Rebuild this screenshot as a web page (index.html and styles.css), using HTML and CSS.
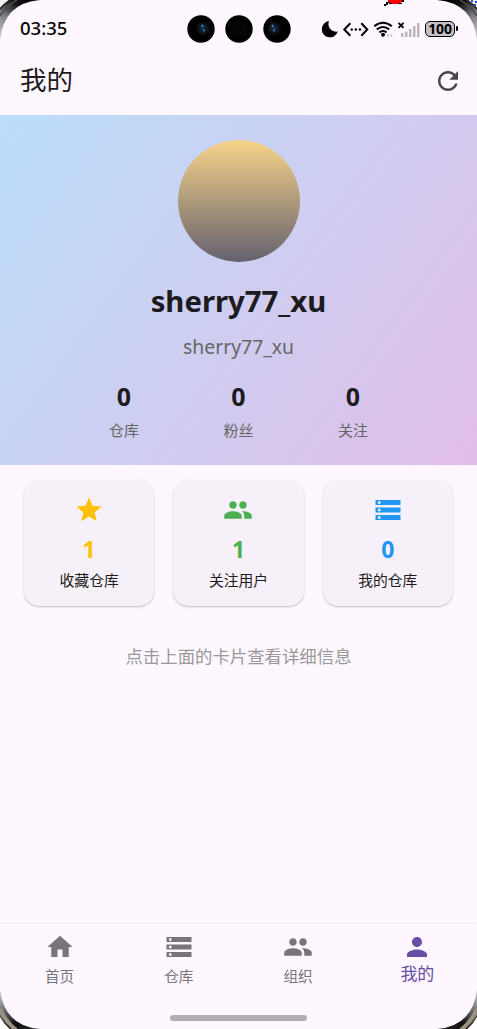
FILE: index.html
```html
<!DOCTYPE html>
<html lang="zh-CN">
<head>
<meta charset="utf-8">
<title>我的</title>
<link rel="stylesheet" href="styles.css">
</head>
<body>
<svg class="defs" width="0" height="0" aria-hidden="true">
  <defs>
    <symbol id="people" viewBox="0 0 24 24"><path d="M16 11c1.66 0 2.99-1.34 2.99-3S17.66 5 16 5s-3 1.34-3 3 1.34 3 3 3zm-8 0c1.66 0 2.99-1.34 2.99-3S9.66 5 8 5 5 6.34 5 8s1.34 3 3 3zm0 2c-2.33 0-7 1.17-7 3.5V19h14v-2.5c0-2.33-4.67-3.500-7-3.500zm8 0c-.29 0-.62.02-.97.05 1.160.84 1.970 1.970 1.970 3.450V19h6v-2.500c0-2.330-4.670-3.500-7-3.500z"/></symbol>
    <symbol id="storage" viewBox="0 0 24 24"><path d="M2 20h20v-4H2v4zm2-3h2v2H4v-2zM2 4v4h20V4H2zm4 3H4V5h2v2zm-4 7h20v-4H2v4zm2-3h2v2H4v-2z"/></symbol>
    <symbol id="home" viewBox="0 0 24 24"><path d="M10 20v-6h4v6h5v-8h3L12 3 2 12h3v8z"/></symbol>
    <symbol id="person" viewBox="0 0 24 24"><path d="M12 12c2.210 0 4-1.790 4-4s-1.790-4-4-4-4 1.790-4 4 1.790 4 4 4zm0 2c-2.670 0-8 1.340-8 4v2h16v-2c0-2.660-5.330-4-8-4z"/></symbol>
    <symbol id="star" viewBox="0 0 24 24"><path d="M12 17.270L18.180 21l-1.640-7.030L22 9.240l-7.190-.61L12 2 9.190 8.630 2 9.240l5.460 4.730L5.820 21z"/></symbol>
    <symbol id="refresh" viewBox="0 0 24 24"><path d="M17.650 6.350C16.200 4.900 14.210 4 12 4c-4.420 0-7.990 3.580-7.990 8s3.570 8 7.990 8c3.730 0 6.840-2.550 7.730-6h-2.080c-.82 2.330-3.040 4-5.650 4-3.310 0-6-2.690-6-6s2.690-6 6-6c1.660 0 3.140.69 4.220 1.780L13 11h7V4l-2.350 2.350z"/></symbol>
  </defs>
</svg>
<div class="phone">
  <header class="status">
    <span class="time">03:35</span>
    <svg class="cameras" width="106" height="30" viewBox="0 0 106 30">
      <defs>
        <radialGradient id="lens"><stop offset="0" stop-color="#1d4873"/><stop offset=".3" stop-color="#122238"/><stop offset=".62" stop-color="#101319"/><stop offset="1" stop-color="#020203"/></radialGradient>
      </defs>
      <circle cx="15" cy="15" r="13.700"/><circle cx="53" cy="15" r="13.700"/><circle cx="91" cy="15" r="13.700"/>
      <circle cx="53" cy="15" r="9" fill="#050505"/>
      <circle cx="17" cy="14.500" r="7.500" fill="url(#lens)"/><circle cx="88" cy="14.500" r="7.500" fill="url(#lens)"/>
      <circle cx="16.300" cy="11.800" r="1.100" fill="#4c91c9"/><circle cx="18" cy="16.500" r=".9" fill="#3984c5"/>
      <circle cx="86.600" cy="11.800" r="1.100" fill="#4c91c9"/><circle cx="88" cy="16.500" r=".9" fill="#3984c5"/>
    </svg>
    <div class="indicators">
      <svg width="104" height="24" viewBox="0 0 104 24">
        <path d="M9 4A8.200 8.200 0 1 0 17.800 14.600A7.900 7.900 0 0 1 9 4z"/>
        <g fill="none" stroke="#000" stroke-width="2"><path d="M30.300 6.200l-6 6.300 6 6.300M41.300 6.200l6 6.300-6 6.300"/></g>
        <circle cx="31.700" cy="12.500" r="1.200"/><circle cx="35.800" cy="12.500" r="1.200"/><circle cx="39.900" cy="12.500" r="1.200"/>
        <g fill="none" stroke="#000" stroke-width="2"><path d="M54.200 9.200Q63 2.200 71.800 9.200M56.800 12.400Q63 7.600 69.200 12.400M59.400 15.400Q63 12.800 66.600 15.400"/></g>
        <circle cx="63" cy="17.700" r="2"/>
        <path d="M66.500 18.500l2.500-1.800v3.600zM73 18.500l-2.500-1.800v3.600z" fill="#c4bfc6"/>
        <path d="M78.500 5.800l5 5m0-5l-5 5" stroke="#000" stroke-width="1.800"/>
        <g fill="#bbb6bc"><path d="M81 16h2.500v4H81zM85 14.500h2.500V20H85zM89 12h2.500v8H89zM93 9h2.500v11H93zM97 6h2.500v14H97z"/></g>
      </svg>
      <div class="battery">100</div>
    </div>
  </header>
  <div class="appbar">
    <h1>我的</h1>
    <svg class="refresh"><use href="#refresh"/></svg>
  </div>
  <section class="hero">
    <div class="avatar"></div>
    <h2>sherry77_xu</h2>
    <p>sherry77_xu</p>
    <div class="stats">
      <div><b>0</b><span>仓库</span></div>
      <div><b>0</b><span>粉丝</span></div>
      <div><b>0</b><span>关注</span></div>
    </div>
  </section>
  <section class="cards">
    <div class="card amber"><svg><use href="#star"/></svg><b>1</b><span>收藏仓库</span></div>
    <div class="card green"><svg><use href="#people"/></svg><b>1</b><span>关注用户</span></div>
    <div class="card blue"><svg><use href="#storage"/></svg><b>0</b><span>我的仓库</span></div>
  </section>
  <main class="hint">点击上面的卡片查看详细信息</main>
  <nav class="tabs">
    <div class="tab"><svg><use href="#home"/></svg><span>首页</span></div>
    <div class="tab"><svg><use href="#storage"/></svg><span>仓库</span></div>
    <div class="tab"><svg><use href="#people"/></svg><span>组织</span></div>
    <div class="tab active"><svg><use href="#person"/></svg><span>我的</span></div>
  </nav>
  <div class="home-area"><div class="home-bar"></div></div>
  <svg class="bezel" width="477" height="1029" viewBox="0 0 477 1029">
    <defs>
      <linearGradient id="edge" x1="0" y1="1" x2=".8" y2="0"><stop offset="0" stop-color="#d7d4d7"/><stop offset=".45" stop-color="#77767a"/><stop offset=".75" stop-color="#111"/><stop offset="1" stop-color="#000"/></linearGradient>
      <linearGradient id="edgeb" x1="0" y1="0" x2=".8" y2="1"><stop offset="0" stop-color="#d0d0d2"/><stop offset=".4" stop-color="#66676a"/><stop offset=".7" stop-color="#111"/><stop offset="1" stop-color="#222"/></linearGradient>
      <g id="top-corner">
        <path d="M0 0H40Q4 3 0 40z" fill="url(#edge)"/>
        <path d="M0 16Q6 6 17 0" fill="none" stroke="#4c4c4c" stroke-width="1.500"/>
        <path d="M0 0H10Q4 4 0 9z" fill="#f2f2f2"/>
        <path d="M0 9Q4 4 10 0" fill="none" stroke="#222" stroke-width="1.500"/>
      </g>
      <g id="bottom-corner">
        <path d="M0 989Q4 1026 40 1029H0z" fill="url(#edgeb)"/>
        <path d="M0 1009Q5 1021 16 1030" fill="none" stroke="#9b9282" stroke-width="4"/>
        <path d="M0 1017Q4 1024 10 1029H0z" fill="#fff"/>
        <path d="M0 1016Q4 1024 10 1029" fill="none" stroke="#5d574c" stroke-width="1"/>
      </g>
    </defs>
    <use href="#top-corner"/><use href="#top-corner" transform="translate(477 0) scale(-1 1)"/>
    <use href="#bottom-corner"/><use href="#bottom-corner" transform="translate(477 0) scale(-1 1)"/>
    <path d="M471 0h2v2h-2zM475 1h2v2h-2zM474 4h2v2h-2z" fill="#2450df"/>
    <path d="M388 0h15v2h-2v2h-9v-1h-4z" fill="#f00"/>
    <path d="M386 2h3v1h-1v2h-2v1h-2V4h2zM402 0h2v2h-2zM389 3h3v1h-3zM399 3h3v1h-3z"/>
  </svg>
</div>
</body>
</html>
```
FILE: styles.css
```css
* { box-sizing: border-box; }
body { margin: 0; font-family: "Noto Sans", "Noto Sans CJK SC", sans-serif; color: #1d1b20; }
h1, h2, p { margin: 0; font-weight: 400; }
b, span, p, h1, h2 { white-space: nowrap; }
svg { display: block; fill: currentColor; }
.defs { position: absolute; }
.phone { position: relative; width: 477px; height: 1029px; background: #fef7ff; display: flex; flex-direction: column; overflow: hidden; }
.status { height: 57px; flex: none; display: grid; grid-template-columns: 186px 106px 1fr; align-items: center; color: #000; }
.time { padding: 0 0 2px 20px; font-size: 18.500px; font-weight: 500; line-height: 24px; }
.indicators { display: flex; align-items: center; padding-left: 28px; gap: 1px; }
.indicators > svg { flex: none; }
.battery { position: relative; width: 30px; height: 16px; border: 1.500px solid #000; border-radius: 5px; background: #c5bfc7; font-size: 14px; font-weight: 700; line-height: 14px; display: flex; justify-content: center; letter-spacing: -.1px; }
.battery::after { content: ""; position: absolute; right: -4px; top: 4px; width: 2px; height: 5px; border-radius: 1px; background: #000; }
.appbar { height: 58px; flex: none; display: flex; justify-content: space-between; padding: 3px 14px 0 20px; }
.appbar h1 { font-size: 26.500px; line-height: 40px; }
.refresh { width: 30px; height: 30px; margin-top: 6px; color: #49454f; }
.hero { height: 350px; flex: none; padding-top: 25px; display: flex; flex-direction: column; align-items: center; background: linear-gradient(126.300deg, #bbdefb, #e1bee7); }
.avatar { width: 122px; height: 122px; border-radius: 50%; background: linear-gradient(#f7d389, #65616e); }
.hero h2 { margin-top: 19px; font-size: 29.300px; font-weight: 700; line-height: 40px; }
.hero p { margin-top: 12px; font-size: 19.400px; line-height: 28px; color: #666; }
.stats { margin-top: 18px; display: grid; grid-template-columns: repeat(3, 114.500px); text-align: center; }
.stats div { display: flex; flex-direction: column; }
.stats b { font-size: 25px; line-height: 34px; }
.stats span { margin-top: 6px; font-size: 15px; line-height: 22px; color: #666; }
.cards { flex: none; padding: 15px 24px 0; display: grid; grid-template-columns: repeat(3, 1fr); gap: 19px; }
.card { height: 126px; border-radius: 15px; background: #f6f1f8; box-shadow: 0 1px 2px rgba(0,0,0,.24); display: flex; flex-direction: column; align-items: center; padding-top: 15px; }
.card svg { width: 30px; height: 30px; }
.card b { margin-top: 9px; font-size: 23px; line-height: 30px; }
.card span { margin-top: 5px; font-size: 14.800px; line-height: 22px; color: #1d1b20; }
.amber { color: #ffc107; }
.green { color: #4caf50; }
.blue { color: #2196f3; }
.hint { flex: 1; padding-top: 37px; text-align: center; font-size: 17.400px; line-height: 26px; color: #999; }
.tabs { height: 72px; flex: none; display: grid; grid-template-columns: repeat(4, 1fr); box-shadow: 0 -1px 2px rgba(0,0,0,.05); }
.tab { display: flex; flex-direction: column; align-items: center; padding-top: 8px; color: #79747a; }
.tab svg { width: 30px; height: 30px; }
.tab span { margin-top: 3px; font-size: 14.600px; line-height: 22px; }
.tab.active { color: #6750a4; }
.tab.active span { margin-top: -1px; font-size: 17px; line-height: 26px; }
.home-area { height: 33px; flex: none; padding-top: 19px; }
.home-bar { width: 137px; height: 6px; margin: 0 auto; border-radius: 3px; background: #b2acb3; }
.bezel { position: absolute; inset: 0; pointer-events: none; fill: #000; }
```
